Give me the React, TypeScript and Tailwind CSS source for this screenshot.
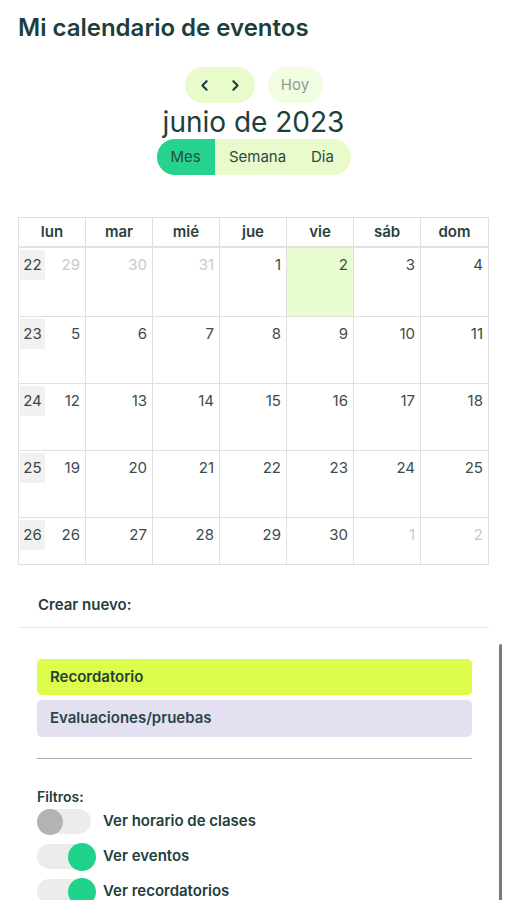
import React, { useState } from 'react';
import { ChevronLeft, ChevronRight } from 'lucide-react';

type View = 'Mes' | 'Semana' | 'Dia';

interface DayCell {
    day: number;
    outside?: boolean;
    today?: boolean;
}

const weekDays = ['lun', 'mar', 'mié', 'jue', 'vie', 'sáb', 'dom'];

// junio 2023, semanas empiezan en lunes
const weeks: { num: number; days: DayCell[] }[] = [
    { num: 22, days: [{ day: 29, outside: true }, { day: 30, outside: true }, { day: 31, outside: true }, { day: 1 }, { day: 2, today: true }, { day: 3 }, { day: 4 }] },
    { num: 23, days: [5, 6, 7, 8, 9, 10, 11].map((d) => ({ day: d })) },
    { num: 24, days: [12, 13, 14, 15, 16, 17, 18].map((d) => ({ day: d })) },
    { num: 25, days: [19, 20, 21, 22, 23, 24, 25].map((d) => ({ day: d })) },
    { num: 26, days: [{ day: 26 }, { day: 27 }, { day: 28 }, { day: 29 }, { day: 30 }, { day: 1, outside: true }, { day: 2, outside: true }] },
];

const rowHeights = ['h-[69px]', 'h-[67px]', 'h-[67px]', 'h-[67px]', 'h-[46px]'];

const Toggle: React.FC<{ on: boolean; label: string; onChange: () => void }> = ({ on, label, onChange }) => (
    <button onClick={onChange} className="flex items-center h-[35px] text-left">
        <span className="relative w-[54px] h-[26px] flex items-center">
            <span className="w-[54px] h-[25px] rounded-full bg-[#ececec]" />
            {on ? (
                <span className="absolute left-[31px] w-[28px] h-[28px] rounded-full bg-[#1fd38b]" />
            ) : (
                <span className="absolute left-0 w-[26px] h-[26px] rounded-full bg-[#b3b3b3]" />
            )}
        </span>
        <span className="ml-[12px] text-[15px] font-semibold text-[#22403d]">{label}</span>
    </button>
);

const App: React.FC = () => {
    const [view, setView] = useState<View>('Mes');
    const [filters, setFilters] = useState({ clases: false, eventos: true, recordatorios: true });

    return (
        <div className="w-[507px] h-[900px] overflow-hidden bg-white font-['Inter',sans-serif] text-[#22403d]">
            <h1 className="pl-[18px] pt-[12px] text-[24px] leading-[32px] font-semibold text-[#1b403c]">
                Mi calendario de eventos
            </h1>

            <div className="mt-[23px] flex flex-col items-center">
                <div className="flex items-center gap-[13px]">
                    <div className="flex items-center justify-center gap-[14px] w-[70px] h-[36px] rounded-full bg-[#e9fbcb]">
                        <ChevronLeft size={17} strokeWidth={3} className="text-[#1b403c]" />
                        <ChevronRight size={17} strokeWidth={3} className="text-[#1b403c]" />
                    </div>
                    <div className="flex items-center justify-center w-[55px] h-[36px] rounded-full bg-[#f1fde0] text-[15px] text-[#8e9c96]">
                        Hoy
                    </div>
                </div>
                <div className="text-[28px] leading-[34px] text-[#1b403c] mt-[2px]">junio de 2023</div>
                <div className="flex h-[36px] rounded-full bg-[#e9fbcb] overflow-hidden text-[15px] text-[#2d4a44]">
                    {(['Mes', 'Semana', 'Dia'] as View[]).map((v) => (
                        <button
                            key={v}
                            onClick={() => setView(v)}
                            className={
                                v === 'Mes'
                                    ? `w-[58px] ${view === v ? 'bg-[#25d38e]' : ''}`
                                    : v === 'Semana'
                                        ? `w-[86px] ${view === v ? 'bg-[#25d38e]' : ''}`
                                        : `w-[50px] pr-[6px] ${view === v ? 'bg-[#25d38e]' : ''}`
                            }
                        >
                            {v}
                        </button>
                    ))}
                </div>
            </div>

            <div className="mx-[18px] mt-[42px] border border-[#e0e0e0]">
                <div className="grid grid-cols-7 h-[30px] border-b-2 border-[#e3e3e3]">
                    {weekDays.map((d, i) => (
                        <div
                            key={d}
                            className={`flex items-center justify-center text-[15px] font-semibold text-[#2b3f3e] ${i < 6 ? 'border-r border-[#e0e0e0]' : ''}`}
                        >
                            {d}
                        </div>
                    ))}
                </div>
                {weeks.map((w, wi) => (
                    <div
                        key={w.num}
                        className={`grid grid-cols-7 ${rowHeights[wi]} ${wi < weeks.length - 1 ? 'border-b border-[#e0e0e0]' : ''}`}
                    >
                        {w.days.map((c, ci) => (
                            <div
                                key={ci}
                                className={`flex justify-between ${ci < 6 ? 'border-r border-[#e0e0e0]' : ''} ${c.today ? 'bg-[#e7fcd0]' : ''}`}
                            >
                                {ci === 0 ? (
                                    <span className="ml-[1px] mt-[2px] w-[25px] h-[30px] bg-[#f1f1f1] text-[15px] leading-[20px] pt-[5px] text-center text-[#3a4747]">
                                        {w.num}
                                    </span>
                                ) : (
                                    <span />
                                )}
                                <span
                                    className={`pr-[5px] pt-[7px] text-[15px] leading-[20px] ${c.outside ? 'text-[#c9c9c9]' : 'text-[#3e4b4a]'}`}
                                >
                                    {c.day}
                                </span>
                            </div>
                        ))}
                    </div>
                ))}
            </div>

            <div className="mx-[18px] mt-[29px] pb-[11px] border-b border-[#ececec]">
                <div className="pl-[20px] text-[15px] leading-[22px] font-semibold text-[#22403d]">Crear nuevo:</div>
            </div>

            <div className="flex mt-[16px]">
                <div className="flex-1 pl-[37px] pr-[27px] pt-[15px]">
                    <button className="w-full h-[36px] rounded-[5px] bg-[#dcfd4c] text-left pl-[13px] text-[15px] font-semibold text-[#263f33]">
                        Recordatorio
                    </button>
                    <button className="mt-[5px] w-full h-[37px] rounded-[5px] bg-[#e3e1f1] text-left pl-[13px] text-[15px] font-semibold text-[#2b4348]">
                        Evaluaciones/pruebas
                    </button>
                    <div className="mt-[21px] h-[1px] bg-[#a8a8a8]" />

                    <div className="mt-[29px] text-[14px] leading-[18px] font-semibold text-[#22403d]">Filtros:</div>
                    <div className="flex flex-col items-start -mt-[2px]">
                        <Toggle
                            on={filters.clases}
                            label="Ver horario de clases"
                            onChange={() => setFilters({ ...filters, clases: !filters.clases })}
                        />
                        <Toggle
                            on={filters.eventos}
                            label="Ver eventos"
                            onChange={() => setFilters({ ...filters, eventos: !filters.eventos })}
                        />
                        <Toggle
                            on={filters.recordatorios}
                            label="Ver recordatorios"
                            onChange={() => setFilters({ ...filters, recordatorios: !filters.recordatorios })}
                        />
                    </div>
                </div>
                <div className="w-[3px] h-[260px] bg-[#7a7a7a] rounded-full mr-[5px]" />
            </div>
        </div>
    );
};

export default App;
